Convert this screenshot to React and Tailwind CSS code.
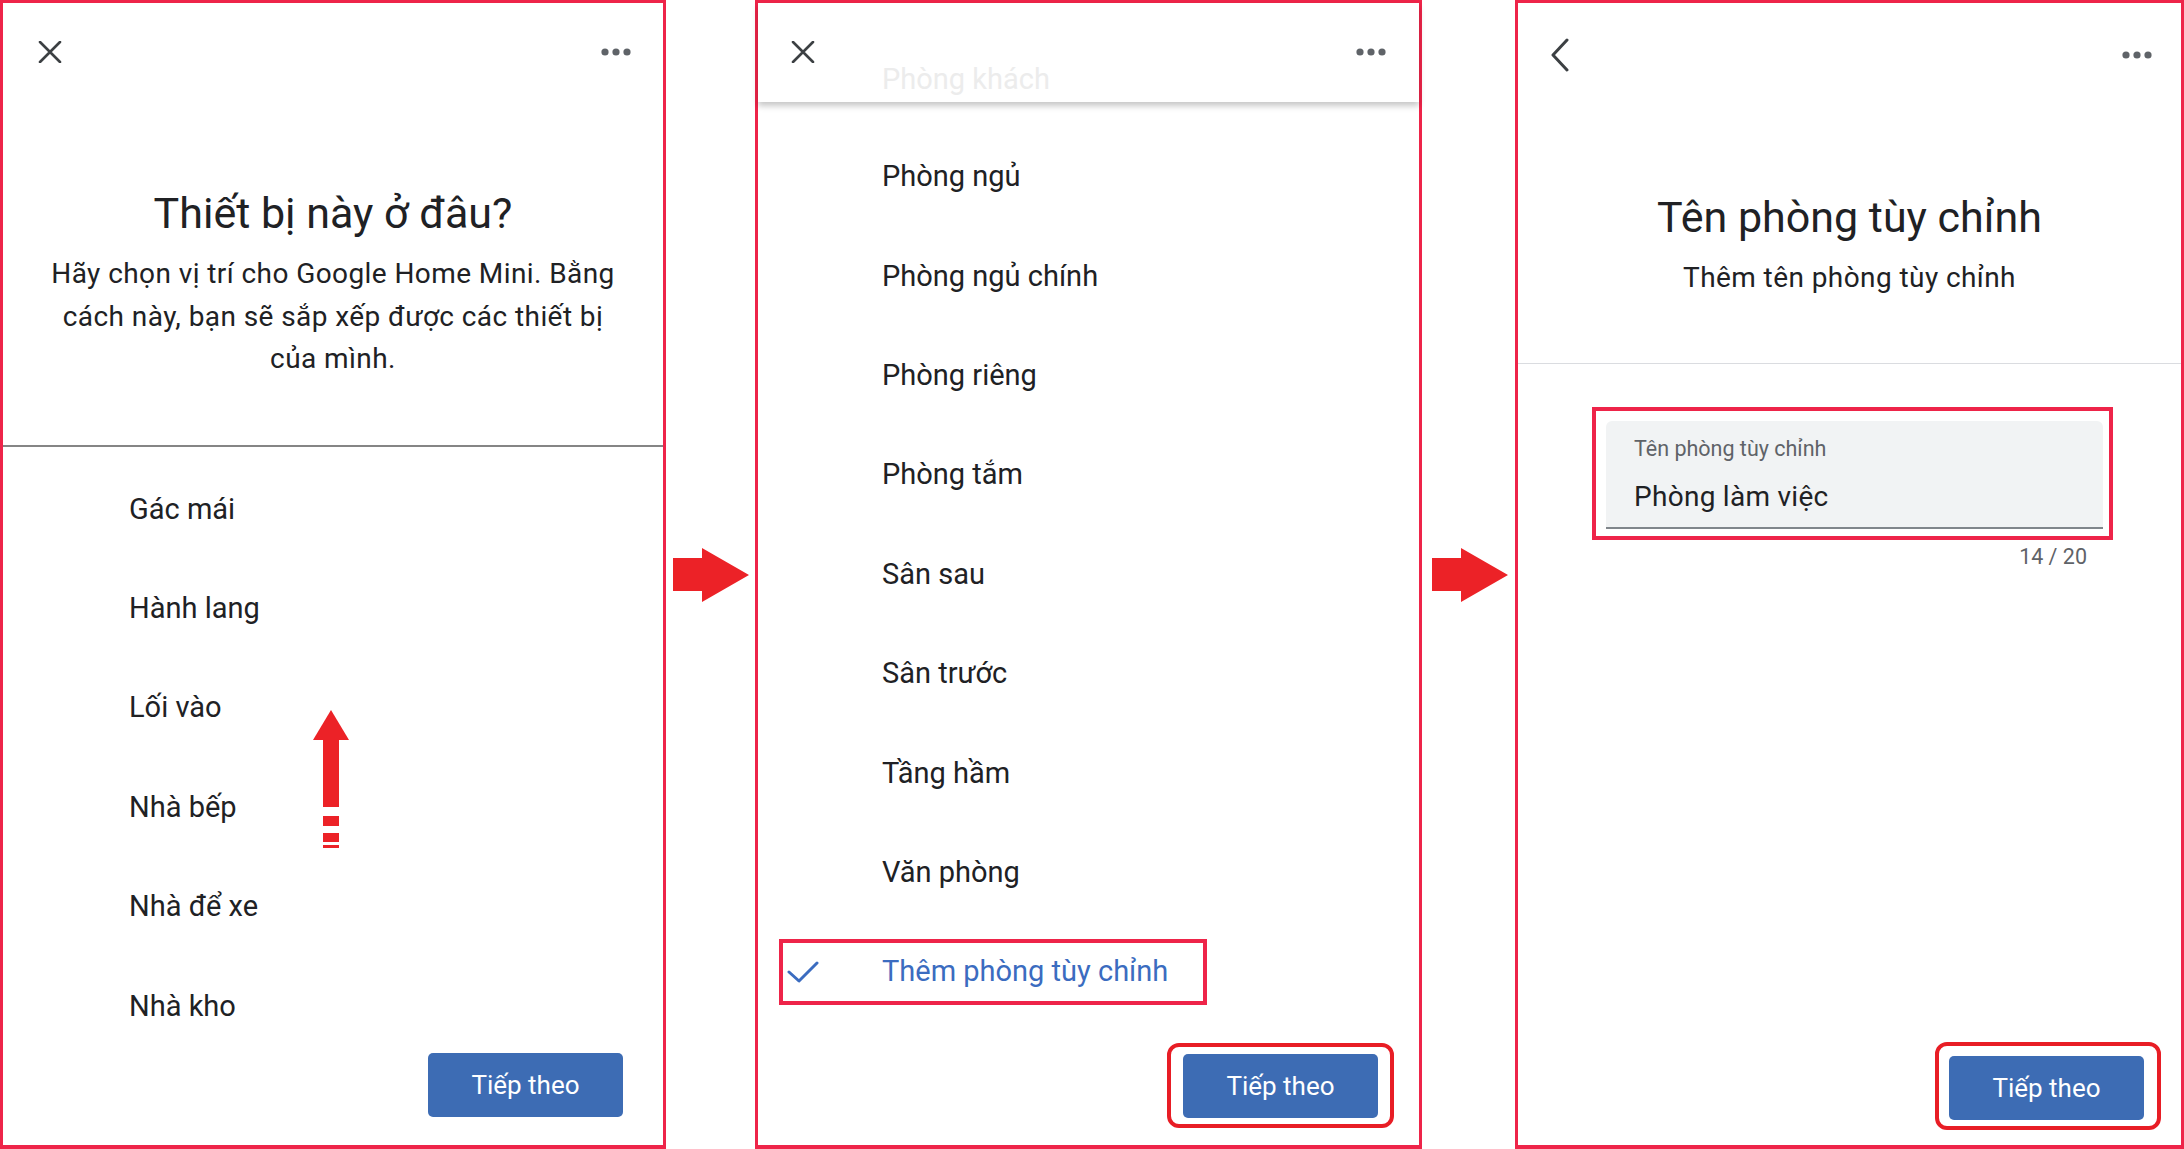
import React from "react";

const Dots = () => (
  <svg width="30" height="8" viewBox="0 0 30 8" className="block">
    <circle cx="4" cy="4" r="3.6" fill="#5f6368" />
    <circle cx="15" cy="4" r="3.6" fill="#5f6368" />
    <circle cx="26" cy="4" r="3.6" fill="#5f6368" />
  </svg>
);

const CloseIcon = () => (
  <svg width="24" height="22" viewBox="0 0 24 22" className="block">
    <path
      d="M2 1 L22 21 M22 1 L2 21"
      stroke="#3c4043"
      strokeWidth="2.6"
      strokeLinecap="round"
      fill="none"
    />
  </svg>
);

const BackIcon = () => (
  <svg width="20" height="34" viewBox="0 0 20 34" className="block">
    <path
      d="M17 2 L3 17 L17 32"
      stroke="#3c4043"
      strokeWidth="3"
      strokeLinecap="round"
      strokeLinejoin="round"
      fill="none"
    />
  </svg>
);

const BigArrow = () => (
  <svg width="76" height="54" viewBox="0 0 76 54" className="block">
    <polygon points="0,10 29,10 29,0 76,27 29,54 29,43 0,43" fill="#ec2227" />
  </svg>
);

const UpArrow = () => (
  <svg width="36" height="138" viewBox="0 0 36 138" className="block">
    <polygon points="18,0 36,30 0,30" fill="#ec2227" />
    <rect x="10" y="29" width="16" height="68" fill="#ec2227" />
    <rect x="10" y="106" width="16" height="10" fill="#ec2227" />
    <rect x="10" y="123" width="16" height="9" fill="#ec2227" />
    <rect x="10" y="135" width="16" height="3" fill="#ec2227" />
  </svg>
);

const NextButton = () => (
  <button className="h-[64px] w-[195px] rounded-[5px] bg-[#3d6cb4] text-[26px] leading-none text-white">
    Tiếp theo
  </button>
);

const firstRooms = ["Gác mái", "Hành lang", "Lối vào", "Nhà bếp", "Nhà để xe", "Nhà kho"];

const moreRooms = [
  "Phòng ngủ",
  "Phòng ngủ chính",
  "Phòng riêng",
  "Phòng tắm",
  "Sân sau",
  "Sân trước",
  "Tầng hầm",
  "Văn phòng",
];

export default function App() {
  return (
    <div className="flex h-[1149px] w-[2184px] bg-white font-['Roboto','Noto_Sans',sans-serif] text-[#202124]">
      {/* step 1 */}
      <div className="relative flex h-full w-[666px] shrink-0 flex-col border-[3px] border-b-4 border-[#ee2449] bg-white">
        <div className="flex h-[98px] shrink-0 items-center justify-between pl-[35px] pr-[32px]">
          <CloseIcon />
          <Dots />
        </div>
        <h1 className="mt-[87px] text-center text-[43px] leading-[50px]">Thiết bị này ở đâu?</h1>
        <p className="mt-[15px] text-center text-[28px] leading-[42.5px] tracking-[0.015em]">
          Hãy chọn vị trí cho Google Home Mini. Bằng
          <br />
          cách này, bạn sẽ sắp xếp được các thiết bị
          <br />
          của mình.
        </p>
        <div className="mt-[64px] h-[2px] shrink-0 bg-[#858585]" />
        <ul className="min-h-0 flex-1 pt-[13px]">
          {firstRooms.map((room) => (
            <li key={room} className="flex h-[99.4px] items-center pl-[126px] text-[29px] leading-none">
              {room}
            </li>
          ))}
        </ul>
        <div className="flex shrink-0 justify-end pb-[28px] pr-[40px]">
          <NextButton />
        </div>
        <div className="absolute left-[310px] top-[707px]">
          <UpArrow />
        </div>
      </div>

      <div className="flex w-[89px] shrink-0 items-center pl-[7px]">
        <BigArrow />
      </div>

      {/* step 2 */}
      <div className="flex h-full w-[667px] shrink-0 flex-col border-[3px] border-b-4 border-[#ee2449] bg-white">
        <div className="relative z-10 h-[99px] shrink-0 bg-white shadow-[0_4px_6px_rgba(0,0,0,0.22)]">
          <div className="flex items-center justify-between pl-[33px] pr-[33px] pt-[38px]">
            <CloseIcon />
            <Dots />
          </div>
          <div className="pl-[124px] text-[29px] leading-[32px] text-[#ececec]">Phòng khách</div>
        </div>
        <ul className="min-h-0 flex-1 pt-[25px]">
          {moreRooms.map((room) => (
            <li key={room} className="flex h-[99.4px] items-center pl-[124px] text-[29px] leading-none">
              {room}
            </li>
          ))}
          <li className="flex h-[99.4px] items-center pl-[21px]">
            <div className="flex h-[66px] w-[428px] items-center border-4 border-[#ee2449]">
              <svg width="32" height="22" viewBox="0 0 32 22" className="ml-[4px] block">
                <polyline
                  points="2,11 12,20 30,2"
                  stroke="#3b6cc0"
                  strokeWidth="3"
                  strokeLinecap="round"
                  strokeLinejoin="round"
                  fill="none"
                />
              </svg>
              <span className="ml-[63px] text-[29px] leading-none text-[#3b6cc0]">Thêm phòng tùy chỉnh</span>
            </div>
          </li>
        </ul>
        <div className="flex shrink-0 justify-end pb-[17px] pr-[25px]">
          <div className="rounded-[12px] border-4 border-[#e81d25] px-[12px] pb-[6px] pt-[7px]">
            <NextButton />
          </div>
        </div>
      </div>

      <div className="flex w-[93px] shrink-0 items-center pl-[10px]">
        <BigArrow />
      </div>

      {/* step 3 */}
      <div className="flex h-full flex-1 flex-col border-[3px] border-b-4 border-[#ee2449] bg-white">
        <div className="flex h-[104px] shrink-0 items-center justify-between pl-[32px] pr-[29px]">
          <BackIcon />
          <Dots />
        </div>
        <h1 className="mt-[85px] text-center text-[43px] leading-[50px]">Tên phòng tùy chỉnh</h1>
        <p className="mt-[15px] text-center text-[28px] leading-[42.5px] tracking-[0.015em]">
          Thêm tên phòng tùy chỉnh
        </p>
        <div className="mt-[63px] h-px shrink-0 bg-[#dadce0]" />
        <div className="ml-[74px] mr-[68px] mt-[43px] border-4 border-[#ee2449] pb-[7px] pl-[10px] pr-[6px] pt-[10px]">
          <div className="rounded-t-[6px] border-b-2 border-[#80868b] bg-[#f1f3f4] pb-[14px] pl-[28px] pt-[16px]">
            <div className="text-[21.5px] leading-[24px] text-[#5f6368]">Tên phòng tùy chỉnh</div>
            <div className="mt-[20px] text-[28px] leading-[32px] tracking-[0.01em]">Phòng làm việc</div>
          </div>
        </div>
        <div className="mr-[68px] mt-[5px] pr-[26px] text-right text-[21.5px] leading-[24px] text-[#5f6368]">
          14 / 20
        </div>
        <div className="mt-auto flex shrink-0 justify-end pb-[15px] pr-[20px]">
          <div className="rounded-[12px] border-4 border-[#e81d25] pb-[6px] pl-[10px] pr-[13px] pt-[10px]">
            <NextButton />
          </div>
        </div>
      </div>
    </div>
  );
}
